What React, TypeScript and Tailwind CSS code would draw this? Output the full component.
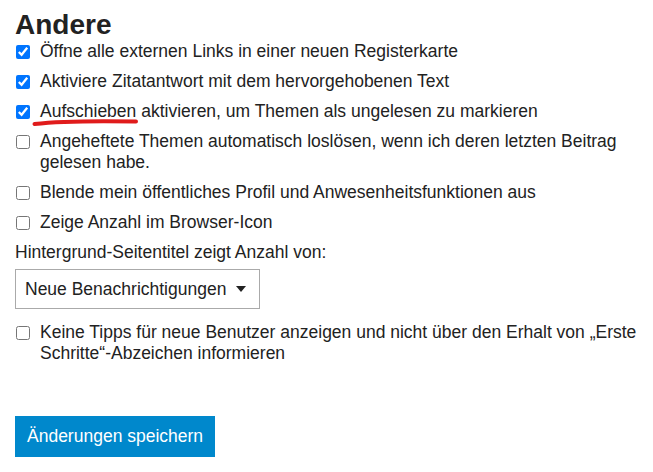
import React from 'react';

const rows1 = [
  { label: 'Öffne alle externen Links in einer neuen Registerkarte', checked: true },
  { label: 'Aktiviere Zitatantwort mit dem hervorgehobenen Text', checked: true },
  { label: 'AUFSCHIEBEN', checked: true },
  { label: 'Angeheftete Themen automatisch loslösen, wenn ich deren letzten Beitrag gelesen habe.', checked: false },
  { label: 'Blende mein öffentliches Profil und Anwesenheitsfunktionen aus', checked: false },
  { label: 'Zeige Anzahl im Browser-Icon', checked: false },
];

const Check: React.FC<{ checked: boolean; children: React.ReactNode }> = ({ checked, children }) => (
  <label className="flex items-start gap-[10px]">
    <input
      type="checkbox"
      defaultChecked={checked}
      className="m-0 mt-[4px] ml-[1px] h-[14px] w-[14px] shrink-0 accent-[#0075ff]"
    />
    <span className="leading-[21px]">{children}</span>
  </label>
);

export default function App() {
  return (
    <div
      className="w-[653px] h-[472px] bg-white px-[15px] pt-[10px] text-[17.5px] text-[#222222]"
      style={{ fontFamily: '"Liberation Sans", Arial, sans-serif' }}
    >
      <h2 className="text-[28px] font-bold leading-[30px] mb-[1px]">Andere</h2>
      <div className="flex flex-col gap-[9px]">
        {rows1.map((r) => (
          <Check key={r.label} checked={r.checked}>
            {r.label === 'AUFSCHIEBEN' ? (
              <>
                <span className="relative">
                  Aufschieben
                  <svg
                    className="absolute left-[-8px] top-[16px]"
                    width="108"
                    height="10"
                    viewBox="0 0 108 10"
                  >
                    <path
                      d="M2.5 7 C 20 5, 50 3.5, 104 4.5"
                      stroke="#e01b1b"
                      strokeWidth="4"
                      strokeLinecap="round"
                      fill="none"
                    />
                  </svg>
                </span>{' '}
                aktivieren, um Themen als ungelesen zu markieren
              </>
            ) : (
              r.label
            )}
          </Check>
        ))}
        <div className="leading-[21px]">Hintergrund-Seitentitel zeigt Anzahl von:</div>
      </div>
      <button className="mt-[6px] flex h-[40px] w-[245px] items-center border border-[#aaaaaa] bg-white px-[9px] text-left">
        <span>Neue Benachrichtigungen</span>
        <svg className="ml-[10px]" width="10" height="6" viewBox="0 0 10 6">
          <path d="M0 0 L10 0 L5 6 Z" fill="#222222" />
        </svg>
      </button>
      <div className="mt-[13px]">
        <Check checked={false}>
          Keine Tipps für neue Benutzer anzeigen und nicht über den Erhalt von „Erste Schritte“-Abzeichen informieren
        </Check>
      </div>
      <button className="mt-[52px] h-[41px] bg-[#0088cc] px-[12px] text-white">Änderungen speichern</button>
    </div>
  );
}
